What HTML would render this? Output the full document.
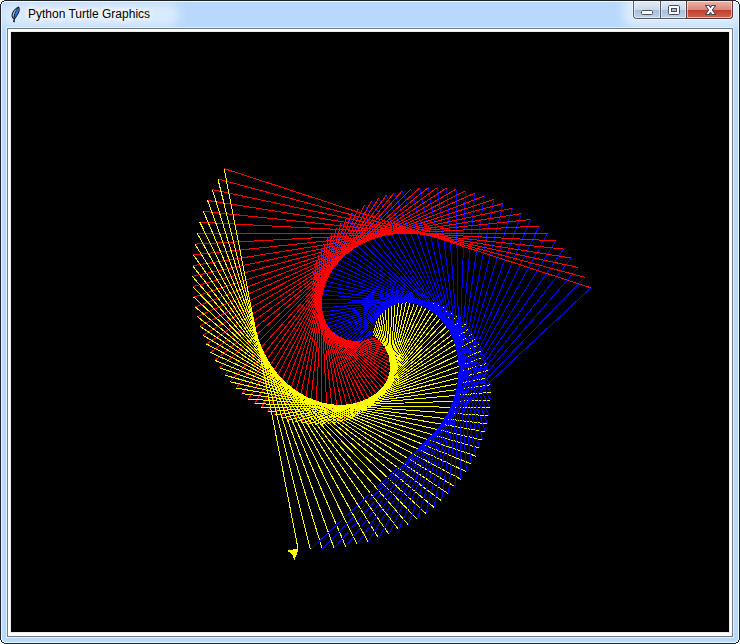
<!DOCTYPE html>
<html><head><meta charset="utf-8"><title>Python Turtle Graphics</title>
<style>
html,body{margin:0;padding:0;background:#fff;overflow:hidden}
body{width:740px;height:644px;position:relative;font-family:"Liberation Sans",sans-serif}
.win{position:absolute;left:0;top:0;width:738px;height:642px;border:1px solid #1d2129;border-radius:5px;background:#b9d9fc;box-shadow:inset 0 0 0 1px #eaf8ff;overflow:hidden}
.title{position:absolute;left:27px;top:5px;font-size:12px;line-height:16px;color:#000;white-space:nowrap;text-shadow:0 0 6px #fff,0 0 6px #fff,0 0 9px #fff,0 0 12px #fff,0 0 14px #fff;}
.glow{position:absolute;left:-2px;top:2px;width:180px;height:24px;border-radius:11px;background:rgba(255,255,255,.45);filter:blur(5px)}
.client{position:absolute;left:6px;top:27px;width:724px;height:607px;border:1px solid #6b7b8c;background:#fff;}
.client:before{content:"";position:absolute;left:-2px;top:-2px;right:-2px;bottom:-2px;border:1px solid #dff3ff;pointer-events:none}
.canvas{position:absolute;left:3px;top:3px;width:718px;height:600px;background:#000;box-shadow:0 0 0 1px #ececec}
.cv{position:absolute;left:0;top:0;display:block}
.btns{position:absolute;left:632px;top:0;width:98px;height:17px;border:1px solid #4d5868;border-top:none;border-radius:0 0 4px 4px;box-shadow:0 0 0 1px rgba(255,255,255,.5);clip-path:inset(0 -1px -1px -1px)}
.b{position:absolute;top:0;height:17px}
.b.min{left:0;width:26px;border-radius:0 0 0 3px;overflow:hidden}
.b.max{left:27px;width:25px}
.b.cls{left:53px;width:45px;border-radius:0 0 3px 0;box-shadow:0 0 0 1px #5e3434}
.b.cls .t,.b.cls .m{border-radius:inherit}
.b.cls .t{border-radius:0}
.b .t{position:absolute;left:0;right:0;top:0;height:9px}
.b .m{position:absolute;left:0;right:0;top:9px;bottom:0}
.min .t,.max .t{background:linear-gradient(#e3ecf7,#c9d8eb)}
.min .m,.max .m{background:linear-gradient(#a9bedb,#bdd1e9)}
.cls .t{background:linear-gradient(#efb3a6,#d98676)}
.cls .m{background:linear-gradient(#c23c26,#cf6650)}
.b:after{content:"";position:absolute;left:0;top:0;right:0;bottom:0;border-radius:inherit;box-shadow:inset 0 0 0 1px rgba(255,255,255,.55)}
.sep{position:absolute;top:0;width:1px;height:17px;background:#4d5868}
.bglow{position:absolute;left:622px;top:-6px;width:120px;height:32px;border-radius:12px;background:rgba(255,255,255,.5);filter:blur(5px)}
.g{position:absolute}
</style></head><body>
<div class="win">
 <div class="glow"></div>
 <div class="bglow"></div>
 <svg class="g" style="left:9px;top:4px" width="14" height="20" viewBox="10 5 14 20">
  <path d="M14.1 19.2 C12.2 18.6 11.1 16.6 11.7 14.2 C12.5 11 15.2 7.6 18.9 6.4 C20.3 8 19.9 11 18.6 13.6 C17.5 15.8 16.2 17.8 14.9 19.2 L14.7 22.3 L13.0 22 L13.6 19 Z" fill="#11141d"/>
  <path d="M14.6 18.2 C16.2 16.2 17.6 13.8 18.4 11.6 C18.9 10.2 19 8.8 18.6 7.8 C17.4 9 16.2 11 15.4 13 C14.8 14.6 14.5 16.6 14.6 18.2 Z" fill="#2f78dc"/>
  <path d="M13.4 17.6 C12.4 16.6 12.4 15 13 13.4 C13.8 11.4 15.4 9.4 17.4 8 C15.8 10.2 14.6 12.6 14 14.8 C13.7 15.9 13.5 16.8 13.4 17.6 Z" fill="#9fd2f4"/>
  <path d="M13.6 17.9 L14.2 17.3" stroke="#e8e0d0" stroke-width="1"/>
 </svg>
 <div class="title">Python Turtle Graphics</div>
 <div class="btns">
  <div class="b min"><div class="t"></div><div class="m"></div></div>
  <div class="sep" style="left:26px"></div>
  <div class="b max"><div class="t"></div><div class="m"></div></div>
  <div class="sep" style="left:52px;background:#6a3030"></div>
  <div class="b cls"><div class="t"></div><div class="m"></div></div>
  <svg class="g" style="left:0;top:0" width="98" height="17" viewBox="0 0 98 17">
   <rect x="7.5" y="9.5" width="11" height="4" rx="1.2" fill="#fff" stroke="#4a4f60"/>
   <rect x="34.5" y="4.5" width="11" height="9" rx="1.2" fill="#fff" stroke="#4a4f60"/>
   <rect x="37.5" y="7.5" width="5" height="3" fill="#a9c0de" stroke="#3e4558"/>
   <path d="M71.5 4.5 L75.2 4.5 L76.5 6.5 L77.8 4.5 L81.5 4.5 L78.4 9 L81.5 13.5 L77.8 13.5 L76.5 11.5 L75.2 13.5 L71.5 13.5 L74.6 9 Z" fill="#fff" stroke="#4b475c" stroke-width="1.1" stroke-linejoin="round"/>
  </svg>
 </div>
 <div class="client"><div class="canvas"><svg class="cv" width="718" height="600" viewBox="0 0 718 600" shape-rendering="crispEdges" fill="none" stroke-width="1" stroke-linecap="butt">
<line x1="362.7" y1="304.4" x2="361.8" y2="302.7" stroke="#ffff00"/>
<line x1="361.8" y1="302.7" x2="359.7" y2="306.0" stroke="#0000ff"/>
<line x1="359.7" y1="306.0" x2="365.5" y2="306.3" stroke="#ff0000"/>
<line x1="365.5" y1="306.3" x2="362.1" y2="299.3" stroke="#ffff00"/>
<line x1="362.1" y1="299.3" x2="356.5" y2="307.3" stroke="#0000ff"/>
<line x1="356.5" y1="307.3" x2="368.1" y2="308.5" stroke="#ff0000"/>
<line x1="368.1" y1="308.5" x2="362.8" y2="296.0" stroke="#ffff00"/>
<line x1="362.8" y1="296.0" x2="353.2" y2="308.2" stroke="#0000ff"/>
<line x1="353.2" y1="308.2" x2="370.5" y2="311.0" stroke="#ff0000"/>
<line x1="370.5" y1="311.0" x2="363.9" y2="292.7" stroke="#ffff00"/>
<line x1="363.9" y1="292.7" x2="349.8" y2="308.8" stroke="#0000ff"/>
<line x1="349.8" y1="308.8" x2="372.7" y2="313.7" stroke="#ff0000"/>
<line x1="372.7" y1="313.7" x2="365.3" y2="289.5" stroke="#ffff00"/>
<line x1="365.3" y1="289.5" x2="346.3" y2="309.1" stroke="#0000ff"/>
<line x1="346.3" y1="309.1" x2="374.6" y2="316.7" stroke="#ff0000"/>
<line x1="374.6" y1="316.7" x2="367.0" y2="286.4" stroke="#ffff00"/>
<line x1="367.0" y1="286.4" x2="342.8" y2="309.0" stroke="#0000ff"/>
<line x1="342.8" y1="309.0" x2="376.1" y2="319.8" stroke="#ff0000"/>
<line x1="376.1" y1="319.8" x2="369.1" y2="283.5" stroke="#ffff00"/>
<line x1="369.1" y1="283.5" x2="339.2" y2="308.6" stroke="#0000ff"/>
<line x1="339.2" y1="308.6" x2="377.4" y2="323.2" stroke="#ff0000"/>
<line x1="377.4" y1="323.2" x2="371.5" y2="280.8" stroke="#ffff00"/>
<line x1="371.5" y1="280.8" x2="335.7" y2="307.7" stroke="#0000ff"/>
<line x1="335.7" y1="307.7" x2="378.4" y2="326.8" stroke="#ff0000"/>
<line x1="378.4" y1="326.8" x2="374.2" y2="278.2" stroke="#ffff00"/>
<line x1="374.2" y1="278.2" x2="332.2" y2="306.6" stroke="#0000ff"/>
<line x1="332.2" y1="306.6" x2="379.0" y2="330.4" stroke="#ff0000"/>
<line x1="379.0" y1="330.4" x2="377.1" y2="275.9" stroke="#ffff00"/>
<line x1="377.1" y1="275.9" x2="328.7" y2="305.0" stroke="#0000ff"/>
<line x1="328.7" y1="305.0" x2="379.3" y2="334.2" stroke="#ff0000"/>
<line x1="379.3" y1="334.2" x2="380.4" y2="273.9" stroke="#ffff00"/>
<line x1="380.4" y1="273.9" x2="325.3" y2="303.1" stroke="#0000ff"/>
<line x1="325.3" y1="303.1" x2="379.2" y2="338.1" stroke="#ff0000"/>
<line x1="379.2" y1="338.1" x2="383.9" y2="272.1" stroke="#ffff00"/>
<line x1="383.9" y1="272.1" x2="322.1" y2="300.9" stroke="#0000ff"/>
<line x1="322.1" y1="300.9" x2="378.8" y2="342.1" stroke="#ff0000"/>
<line x1="378.8" y1="342.1" x2="387.6" y2="270.6" stroke="#ffff00"/>
<line x1="387.6" y1="270.6" x2="319.0" y2="298.3" stroke="#0000ff"/>
<line x1="319.0" y1="298.3" x2="378.0" y2="346.1" stroke="#ff0000"/>
<line x1="378.0" y1="346.1" x2="391.5" y2="269.4" stroke="#ffff00"/>
<line x1="391.5" y1="269.4" x2="316.0" y2="295.4" stroke="#0000ff"/>
<line x1="316.0" y1="295.4" x2="376.8" y2="350.1" stroke="#ff0000"/>
<line x1="376.8" y1="350.1" x2="395.6" y2="268.5" stroke="#ffff00"/>
<line x1="395.6" y1="268.5" x2="313.3" y2="292.1" stroke="#0000ff"/>
<line x1="313.3" y1="292.1" x2="375.2" y2="354.1" stroke="#ff0000"/>
<line x1="375.2" y1="354.1" x2="399.9" y2="268.0" stroke="#ffff00"/>
<line x1="399.9" y1="268.0" x2="310.7" y2="288.6" stroke="#0000ff"/>
<line x1="310.7" y1="288.6" x2="373.3" y2="358.1" stroke="#ff0000"/>
<line x1="373.3" y1="358.1" x2="404.4" y2="267.8" stroke="#ffff00"/>
<line x1="404.4" y1="267.8" x2="308.5" y2="284.7" stroke="#0000ff"/>
<line x1="308.5" y1="284.7" x2="371.0" y2="361.9" stroke="#ff0000"/>
<line x1="371.0" y1="361.9" x2="408.9" y2="268.0" stroke="#ffff00"/>
<line x1="408.9" y1="268.0" x2="306.5" y2="280.6" stroke="#0000ff"/>
<line x1="306.5" y1="280.6" x2="368.3" y2="365.7" stroke="#ff0000"/>
<line x1="368.3" y1="365.7" x2="413.6" y2="268.6" stroke="#ffff00"/>
<line x1="413.6" y1="268.6" x2="304.7" y2="276.2" stroke="#0000ff"/>
<line x1="304.7" y1="276.2" x2="365.2" y2="369.3" stroke="#ff0000"/>
<line x1="365.2" y1="369.3" x2="418.2" y2="269.6" stroke="#ffff00"/>
<line x1="418.2" y1="269.6" x2="303.3" y2="271.6" stroke="#0000ff"/>
<line x1="303.3" y1="271.6" x2="361.8" y2="372.8" stroke="#ff0000"/>
<line x1="361.8" y1="372.8" x2="423.0" y2="270.9" stroke="#ffff00"/>
<line x1="423.0" y1="270.9" x2="302.3" y2="266.7" stroke="#0000ff"/>
<line x1="302.3" y1="266.7" x2="358.0" y2="376.1" stroke="#ff0000"/>
<line x1="358.0" y1="376.1" x2="427.7" y2="272.7" stroke="#ffff00"/>
<line x1="427.7" y1="272.7" x2="301.6" y2="261.7" stroke="#0000ff"/>
<line x1="301.6" y1="261.7" x2="353.9" y2="379.1" stroke="#ff0000"/>
<line x1="353.9" y1="379.1" x2="432.4" y2="274.9" stroke="#ffff00"/>
<line x1="432.4" y1="274.9" x2="301.2" y2="256.5" stroke="#0000ff"/>
<line x1="301.2" y1="256.5" x2="349.4" y2="381.9" stroke="#ff0000"/>
<line x1="349.4" y1="381.9" x2="437.0" y2="277.5" stroke="#ffff00"/>
<line x1="437.0" y1="277.5" x2="301.3" y2="251.1" stroke="#0000ff"/>
<line x1="301.3" y1="251.1" x2="344.6" y2="384.5" stroke="#ff0000"/>
<line x1="344.6" y1="384.5" x2="441.6" y2="280.5" stroke="#ffff00"/>
<line x1="441.6" y1="280.5" x2="301.7" y2="245.6" stroke="#0000ff"/>
<line x1="301.7" y1="245.6" x2="339.6" y2="386.7" stroke="#ff0000"/>
<line x1="339.6" y1="386.7" x2="446.0" y2="283.9" stroke="#ffff00"/>
<line x1="446.0" y1="283.9" x2="302.6" y2="240.0" stroke="#0000ff"/>
<line x1="302.6" y1="240.0" x2="334.2" y2="388.6" stroke="#ff0000"/>
<line x1="334.2" y1="388.6" x2="450.3" y2="287.7" stroke="#ffff00"/>
<line x1="450.3" y1="287.7" x2="303.9" y2="234.4" stroke="#0000ff"/>
<line x1="303.9" y1="234.4" x2="328.6" y2="390.2" stroke="#ff0000"/>
<line x1="328.6" y1="390.2" x2="454.5" y2="291.9" stroke="#ffff00"/>
<line x1="454.5" y1="291.9" x2="305.6" y2="228.7" stroke="#0000ff"/>
<line x1="305.6" y1="228.7" x2="322.7" y2="391.4" stroke="#ff0000"/>
<line x1="322.7" y1="391.4" x2="458.4" y2="296.5" stroke="#ffff00"/>
<line x1="458.4" y1="296.5" x2="307.8" y2="223.1" stroke="#0000ff"/>
<line x1="307.8" y1="223.1" x2="316.7" y2="392.3" stroke="#ff0000"/>
<line x1="316.7" y1="392.3" x2="462.0" y2="301.4" stroke="#ffff00"/>
<line x1="462.0" y1="301.4" x2="310.4" y2="217.4" stroke="#0000ff"/>
<line x1="310.4" y1="217.4" x2="310.4" y2="392.7" stroke="#ff0000"/>
<line x1="310.4" y1="392.7" x2="465.4" y2="306.8" stroke="#ffff00"/>
<line x1="465.4" y1="306.8" x2="313.5" y2="211.8" stroke="#0000ff"/>
<line x1="313.5" y1="211.8" x2="304.0" y2="392.7" stroke="#ff0000"/>
<line x1="304.0" y1="392.7" x2="468.6" y2="312.4" stroke="#ffff00"/>
<line x1="468.6" y1="312.4" x2="317.0" y2="206.3" stroke="#0000ff"/>
<line x1="317.0" y1="206.3" x2="297.4" y2="392.3" stroke="#ff0000"/>
<line x1="297.4" y1="392.3" x2="471.3" y2="318.5" stroke="#ffff00"/>
<line x1="471.3" y1="318.5" x2="320.9" y2="200.9" stroke="#0000ff"/>
<line x1="320.9" y1="200.9" x2="290.8" y2="391.4" stroke="#ff0000"/>
<line x1="290.8" y1="391.4" x2="473.8" y2="324.8" stroke="#ffff00"/>
<line x1="473.8" y1="324.8" x2="325.3" y2="195.7" stroke="#0000ff"/>
<line x1="325.3" y1="195.7" x2="284.0" y2="390.0" stroke="#ff0000"/>
<line x1="284.0" y1="390.0" x2="475.9" y2="331.4" stroke="#ffff00"/>
<line x1="475.9" y1="331.4" x2="330.2" y2="190.7" stroke="#0000ff"/>
<line x1="330.2" y1="190.7" x2="277.2" y2="388.2" stroke="#ff0000"/>
<line x1="277.2" y1="388.2" x2="477.6" y2="338.3" stroke="#ffff00"/>
<line x1="477.6" y1="338.3" x2="335.4" y2="185.8" stroke="#0000ff"/>
<line x1="335.4" y1="185.8" x2="270.4" y2="385.9" stroke="#ff0000"/>
<line x1="270.4" y1="385.9" x2="478.8" y2="345.4" stroke="#ffff00"/>
<line x1="478.8" y1="345.4" x2="341.1" y2="181.3" stroke="#0000ff"/>
<line x1="341.1" y1="181.3" x2="263.6" y2="383.1" stroke="#ff0000"/>
<line x1="263.6" y1="383.1" x2="479.7" y2="352.8" stroke="#ffff00"/>
<line x1="479.7" y1="352.8" x2="347.2" y2="177.0" stroke="#0000ff"/>
<line x1="347.2" y1="177.0" x2="256.9" y2="379.8" stroke="#ff0000"/>
<line x1="256.9" y1="379.8" x2="480.0" y2="360.3" stroke="#ffff00"/>
<line x1="480.0" y1="360.3" x2="353.7" y2="173.0" stroke="#0000ff"/>
<line x1="353.7" y1="173.0" x2="250.2" y2="376.0" stroke="#ff0000"/>
<line x1="250.2" y1="376.0" x2="479.9" y2="368.0" stroke="#ffff00"/>
<line x1="479.9" y1="368.0" x2="360.5" y2="169.3" stroke="#0000ff"/>
<line x1="360.5" y1="169.3" x2="243.7" y2="371.8" stroke="#ff0000"/>
<line x1="243.7" y1="371.8" x2="479.3" y2="375.9" stroke="#ffff00"/>
<line x1="479.3" y1="375.9" x2="367.8" y2="166.1" stroke="#0000ff"/>
<line x1="367.8" y1="166.1" x2="237.3" y2="367.0" stroke="#ff0000"/>
<line x1="237.3" y1="367.0" x2="478.2" y2="383.8" stroke="#ffff00"/>
<line x1="478.2" y1="383.8" x2="375.3" y2="163.2" stroke="#0000ff"/>
<line x1="375.3" y1="163.2" x2="231.1" y2="361.7" stroke="#ff0000"/>
<line x1="231.1" y1="361.7" x2="476.6" y2="391.9" stroke="#ffff00"/>
<line x1="476.6" y1="391.9" x2="383.2" y2="160.7" stroke="#0000ff"/>
<line x1="383.2" y1="160.7" x2="225.1" y2="356.0" stroke="#ff0000"/>
<line x1="225.1" y1="356.0" x2="474.4" y2="399.9" stroke="#ffff00"/>
<line x1="474.4" y1="399.9" x2="391.4" y2="158.7" stroke="#0000ff"/>
<line x1="391.4" y1="158.7" x2="219.3" y2="349.8" stroke="#ff0000"/>
<line x1="219.3" y1="349.8" x2="471.7" y2="408.0" stroke="#ffff00"/>
<line x1="471.7" y1="408.0" x2="399.8" y2="157.1" stroke="#0000ff"/>
<line x1="399.8" y1="157.1" x2="213.9" y2="343.1" stroke="#ff0000"/>
<line x1="213.9" y1="343.1" x2="468.5" y2="416.1" stroke="#ffff00"/>
<line x1="468.5" y1="416.1" x2="408.5" y2="156.1" stroke="#0000ff"/>
<line x1="408.5" y1="156.1" x2="208.7" y2="335.9" stroke="#ff0000"/>
<line x1="208.7" y1="335.9" x2="464.7" y2="424.1" stroke="#ffff00"/>
<line x1="464.7" y1="424.1" x2="417.3" y2="155.5" stroke="#0000ff"/>
<line x1="417.3" y1="155.5" x2="203.9" y2="328.4" stroke="#ff0000"/>
<line x1="203.9" y1="328.4" x2="460.4" y2="432.0" stroke="#ffff00"/>
<line x1="460.4" y1="432.0" x2="426.4" y2="155.5" stroke="#0000ff"/>
<line x1="426.4" y1="155.5" x2="199.5" y2="320.4" stroke="#ff0000"/>
<line x1="199.5" y1="320.4" x2="455.5" y2="439.7" stroke="#ffff00"/>
<line x1="455.5" y1="439.7" x2="435.6" y2="156.1" stroke="#0000ff"/>
<line x1="435.6" y1="156.1" x2="195.5" y2="312.0" stroke="#ff0000"/>
<line x1="195.5" y1="312.0" x2="450.0" y2="447.3" stroke="#ffff00"/>
<line x1="450.0" y1="447.3" x2="445.0" y2="157.2" stroke="#0000ff"/>
<line x1="445.0" y1="157.2" x2="191.9" y2="303.2" stroke="#ff0000"/>
<line x1="191.9" y1="303.2" x2="444.0" y2="454.7" stroke="#ffff00"/>
<line x1="444.0" y1="454.7" x2="454.4" y2="158.8" stroke="#0000ff"/>
<line x1="454.4" y1="158.8" x2="188.8" y2="294.1" stroke="#ff0000"/>
<line x1="188.8" y1="294.1" x2="437.5" y2="461.9" stroke="#ffff00"/>
<line x1="437.5" y1="461.9" x2="463.8" y2="161.1" stroke="#0000ff"/>
<line x1="463.8" y1="161.1" x2="186.3" y2="284.7" stroke="#ff0000"/>
<line x1="186.3" y1="284.7" x2="430.5" y2="468.7" stroke="#ffff00"/>
<line x1="430.5" y1="468.7" x2="473.3" y2="164.0" stroke="#0000ff"/>
<line x1="473.3" y1="164.0" x2="184.2" y2="275.0" stroke="#ff0000"/>
<line x1="184.2" y1="275.0" x2="422.9" y2="475.3" stroke="#ffff00"/>
<line x1="422.9" y1="475.3" x2="482.8" y2="167.5" stroke="#0000ff"/>
<line x1="482.8" y1="167.5" x2="182.7" y2="265.0" stroke="#ff0000"/>
<line x1="182.7" y1="265.0" x2="414.9" y2="481.5" stroke="#ffff00"/>
<line x1="414.9" y1="481.5" x2="492.1" y2="171.5" stroke="#0000ff"/>
<line x1="492.1" y1="171.5" x2="181.7" y2="254.7" stroke="#ff0000"/>
<line x1="181.7" y1="254.7" x2="406.3" y2="487.3" stroke="#ffff00"/>
<line x1="406.3" y1="487.3" x2="501.4" y2="176.2" stroke="#0000ff"/>
<line x1="501.4" y1="176.2" x2="181.3" y2="244.3" stroke="#ff0000"/>
<line x1="181.3" y1="244.3" x2="397.3" y2="492.7" stroke="#ffff00"/>
<line x1="397.3" y1="492.7" x2="510.5" y2="181.6" stroke="#0000ff"/>
<line x1="510.5" y1="181.6" x2="181.6" y2="233.7" stroke="#ff0000"/>
<line x1="181.6" y1="233.7" x2="387.8" y2="497.7" stroke="#ffff00"/>
<line x1="387.8" y1="497.7" x2="519.5" y2="187.5" stroke="#0000ff"/>
<line x1="519.5" y1="187.5" x2="182.4" y2="222.9" stroke="#ff0000"/>
<line x1="182.4" y1="222.9" x2="377.9" y2="502.1" stroke="#ffff00"/>
<line x1="377.9" y1="502.1" x2="528.2" y2="194.0" stroke="#0000ff"/>
<line x1="528.2" y1="194.0" x2="183.9" y2="212.1" stroke="#ff0000"/>
<line x1="183.9" y1="212.1" x2="367.7" y2="506.1" stroke="#ffff00"/>
<line x1="367.7" y1="506.1" x2="536.7" y2="201.1" stroke="#0000ff"/>
<line x1="536.7" y1="201.1" x2="186.1" y2="201.1" stroke="#ff0000"/>
<line x1="186.1" y1="201.1" x2="357.0" y2="509.5" stroke="#ffff00"/>
<line x1="357.0" y1="509.5" x2="544.9" y2="208.9" stroke="#0000ff"/>
<line x1="544.9" y1="208.9" x2="188.9" y2="190.2" stroke="#ff0000"/>
<line x1="188.9" y1="190.2" x2="346.0" y2="512.3" stroke="#ffff00"/>
<line x1="346.0" y1="512.3" x2="552.7" y2="217.1" stroke="#0000ff"/>
<line x1="552.7" y1="217.1" x2="192.4" y2="179.3" stroke="#ff0000"/>
<line x1="192.4" y1="179.3" x2="334.7" y2="514.6" stroke="#ffff00"/>
<line x1="334.7" y1="514.6" x2="560.2" y2="226.0" stroke="#0000ff"/>
<line x1="560.2" y1="226.0" x2="196.6" y2="168.4" stroke="#ff0000"/>
<line x1="196.6" y1="168.4" x2="323.1" y2="516.2" stroke="#ffff00"/>
<line x1="323.1" y1="516.2" x2="567.2" y2="235.4" stroke="#0000ff"/>
<line x1="567.2" y1="235.4" x2="201.4" y2="157.6" stroke="#ff0000"/>
<line x1="201.4" y1="157.6" x2="311.3" y2="517.1" stroke="#ffff00"/>
<line x1="311.3" y1="517.1" x2="573.8" y2="245.3" stroke="#0000ff"/>
<line x1="573.8" y1="245.3" x2="206.9" y2="147.0" stroke="#ff0000"/>
<line x1="206.9" y1="147.0" x2="299.3" y2="517.5" stroke="#ffff00"/>
<line x1="299.3" y1="517.5" x2="579.9" y2="255.8" stroke="#0000ff"/>
<line x1="579.9" y1="255.8" x2="213.1" y2="136.6" stroke="#ff0000"/>
<line x1="213.1" y1="136.6" x2="287.1" y2="517.1" stroke="#ffff00"/>
<polygon points="287.1,517.1 277.0,519.0 281.7,521.6 283.4,526.7" fill="#ffff00" stroke="#ffff00" stroke-width="1"/>
</svg></div></div>
</div>
<svg class="g" style="left:0px;top:0px" width="5" height="5" viewBox="0 0 5 5" shape-rendering="crispEdges"><rect x="0" y="0" width="1" height="1" fill="#ffffff"/><rect x="1" y="0" width="1" height="1" fill="#ffffff"/><rect x="2" y="0" width="1" height="1" fill="#ffffff"/><rect x="3" y="0" width="1" height="1" fill="#ffffff"/><rect x="4" y="0" width="1" height="1" fill="#1d2129"/><rect x="0" y="1" width="1" height="1" fill="#ffffff"/><rect x="1" y="1" width="1" height="1" fill="#ffffff"/><rect x="2" y="1" width="1" height="1" fill="#1d2129"/><rect x="3" y="1" width="1" height="1" fill="#1d2129"/><rect x="4" y="1" width="1" height="1" fill="#eaf8ff"/><rect x="0" y="2" width="1" height="1" fill="#ffffff"/><rect x="1" y="2" width="1" height="1" fill="#1d2129"/><rect x="2" y="2" width="1" height="1" fill="#eaf8ff"/><rect x="3" y="2" width="1" height="1" fill="#eaf8ff"/><rect x="0" y="3" width="1" height="1" fill="#ffffff"/><rect x="1" y="3" width="1" height="1" fill="#1d2129"/><rect x="2" y="3" width="1" height="1" fill="#eaf8ff"/><rect x="0" y="4" width="1" height="1" fill="#1d2129"/><rect x="1" y="4" width="1" height="1" fill="#eaf8ff"/></svg>
<svg class="g" style="left:735px;top:0px" width="5" height="5" viewBox="0 0 5 5" shape-rendering="crispEdges"><rect x="4" y="0" width="1" height="1" fill="#ffffff"/><rect x="3" y="0" width="1" height="1" fill="#ffffff"/><rect x="2" y="0" width="1" height="1" fill="#ffffff"/><rect x="1" y="0" width="1" height="1" fill="#ffffff"/><rect x="0" y="0" width="1" height="1" fill="#1d2129"/><rect x="4" y="1" width="1" height="1" fill="#ffffff"/><rect x="3" y="1" width="1" height="1" fill="#ffffff"/><rect x="2" y="1" width="1" height="1" fill="#1d2129"/><rect x="1" y="1" width="1" height="1" fill="#1d2129"/><rect x="0" y="1" width="1" height="1" fill="#eaf8ff"/><rect x="4" y="2" width="1" height="1" fill="#ffffff"/><rect x="3" y="2" width="1" height="1" fill="#1d2129"/><rect x="2" y="2" width="1" height="1" fill="#eaf8ff"/><rect x="1" y="2" width="1" height="1" fill="#eaf8ff"/><rect x="4" y="3" width="1" height="1" fill="#ffffff"/><rect x="3" y="3" width="1" height="1" fill="#1d2129"/><rect x="2" y="3" width="1" height="1" fill="#eaf8ff"/><rect x="4" y="4" width="1" height="1" fill="#1d2129"/><rect x="3" y="4" width="1" height="1" fill="#eaf8ff"/></svg>
<svg class="g" style="left:0px;top:639px" width="5" height="5" viewBox="0 0 5 5" shape-rendering="crispEdges"><rect x="0" y="4" width="1" height="1" fill="#ffffff"/><rect x="1" y="4" width="1" height="1" fill="#ffffff"/><rect x="2" y="4" width="1" height="1" fill="#ffffff"/><rect x="3" y="4" width="1" height="1" fill="#ffffff"/><rect x="4" y="4" width="1" height="1" fill="#1d2129"/><rect x="0" y="3" width="1" height="1" fill="#ffffff"/><rect x="1" y="3" width="1" height="1" fill="#ffffff"/><rect x="2" y="3" width="1" height="1" fill="#1d2129"/><rect x="3" y="3" width="1" height="1" fill="#1d2129"/><rect x="4" y="3" width="1" height="1" fill="#eaf8ff"/><rect x="0" y="2" width="1" height="1" fill="#ffffff"/><rect x="1" y="2" width="1" height="1" fill="#1d2129"/><rect x="2" y="2" width="1" height="1" fill="#eaf8ff"/><rect x="3" y="2" width="1" height="1" fill="#eaf8ff"/><rect x="0" y="1" width="1" height="1" fill="#ffffff"/><rect x="1" y="1" width="1" height="1" fill="#1d2129"/><rect x="2" y="1" width="1" height="1" fill="#eaf8ff"/><rect x="0" y="0" width="1" height="1" fill="#1d2129"/><rect x="1" y="0" width="1" height="1" fill="#eaf8ff"/></svg>
<svg class="g" style="left:735px;top:639px" width="5" height="5" viewBox="0 0 5 5" shape-rendering="crispEdges"><rect x="4" y="4" width="1" height="1" fill="#ffffff"/><rect x="3" y="4" width="1" height="1" fill="#ffffff"/><rect x="2" y="4" width="1" height="1" fill="#ffffff"/><rect x="1" y="4" width="1" height="1" fill="#ffffff"/><rect x="0" y="4" width="1" height="1" fill="#1d2129"/><rect x="4" y="3" width="1" height="1" fill="#ffffff"/><rect x="3" y="3" width="1" height="1" fill="#ffffff"/><rect x="2" y="3" width="1" height="1" fill="#1d2129"/><rect x="1" y="3" width="1" height="1" fill="#1d2129"/><rect x="0" y="3" width="1" height="1" fill="#eaf8ff"/><rect x="4" y="2" width="1" height="1" fill="#ffffff"/><rect x="3" y="2" width="1" height="1" fill="#1d2129"/><rect x="2" y="2" width="1" height="1" fill="#eaf8ff"/><rect x="1" y="2" width="1" height="1" fill="#eaf8ff"/><rect x="4" y="1" width="1" height="1" fill="#ffffff"/><rect x="3" y="1" width="1" height="1" fill="#1d2129"/><rect x="2" y="1" width="1" height="1" fill="#eaf8ff"/><rect x="4" y="0" width="1" height="1" fill="#1d2129"/><rect x="3" y="0" width="1" height="1" fill="#eaf8ff"/></svg>
</body></html>
